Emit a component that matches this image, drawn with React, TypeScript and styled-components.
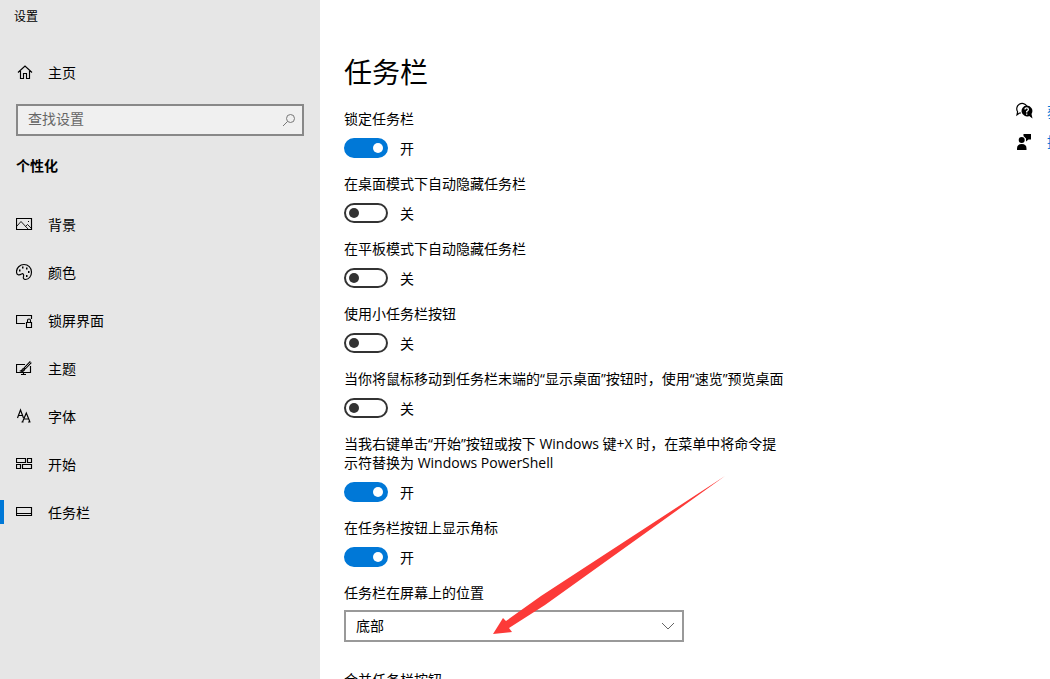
import React, { useId, useState } from 'react';
import styled, { createGlobalStyle, css } from 'styled-components';

const GlobalStyle = createGlobalStyle`
  *, *::before, *::after { box-sizing: border-box; }
  body {
    margin: 0;
    background: #fff;
    color: #000;
    font: 14px/19px 'Open Sans', 'Noto Sans CJK SC', sans-serif;
  }
  button, input, select { font: inherit; color: inherit; }
`;

const Window = styled.div`
  display: flex;
  height: 100vh;
  overflow: hidden;
`;

const Sidebar = styled.aside`
  flex: 0 0 320px;
  background: #e6e6e6;
`;

const WindowTitle = styled.div`
  padding: 9px 14px 7px;
  font-size: 12px;
  line-height: 16px;
`;

const NavLink = styled.a<{ $active?: boolean }>`
  display: flex;
  align-items: center;
  gap: 12px;
  height: 48px;
  padding-left: 12px;
  border-left: 4px solid transparent;
  color: #000;
  text-decoration: none;
  ${({ $active }) =>
    $active &&
    css`
      border-image: linear-gradient(transparent 12px, #0078d7 12px, #0078d7 36px, transparent 36px) 0 0 0 4;
    `}
`;

const HomeArea = styled.div`
  padding-top: 16px;
`;

const NavIcon = styled.svg`
  flex: none;
  width: 20px;
  height: 20px;
  fill: none;
  stroke: #000;
  stroke-width: 1.15;
`;

const SearchBox = styled.label`
  display: flex;
  align-items: center;
  height: 32px;
  margin: 8px 16px 0;
  padding: 0 6px 0 10px;
  border: 2px solid #888;
  background: #f0f0f0;
`;

const SearchInput = styled.input`
  flex: 1;
  min-width: 0;
  padding: 0 0 3px;
  border: 0;
  outline: 0;
  background: transparent;
  &::placeholder { color: #666; opacity: 1; }
`;

const SearchIcon = styled.svg`
  width: 14px;
  height: 14px;
  fill: none;
  stroke: #777;
`;

const GroupTitle = styled.h2`
  margin: 20px 16px 24px;
  font-size: 14px;
  line-height: 20px;
  font-weight: 700;
`;

const Main = styled.main`
  display: flex;
  flex: 1;
  min-width: 0;
  padding-left: 24px;
`;

const Settings = styled.section`
  flex: 1;
  min-width: 0;
`;

const PageTitle = styled.h1`
  margin: 52px 0 17px;
  font-size: 28px;
  line-height: 40px;
  font-weight: 400;
`;

const Setting = styled.div`
  display: flex;
  flex-direction: column;
  align-items: flex-start;
  gap: 10px;
  max-width: 445px;
  margin-bottom: 16px;
`;

const SelectSetting = styled(Setting)`
  gap: 8px;
  margin-bottom: 28px;
`;

const ToggleRow = styled.div`
  display: flex;
  align-items: center;
  gap: 12px;
  height: 20px;
`;

const Switch = styled.input`
  appearance: none;
  display: flex;
  align-items: center;
  width: 44px;
  height: 20px;
  margin: 0;
  padding: 0 3px;
  border: 2px solid #333;
  border-radius: 10px;
  &::before {
    content: '';
    width: 10px;
    height: 10px;
    border-radius: 50%;
    background: #333;
  }
  &:checked {
    justify-content: flex-end;
    border-color: #0078d7;
    background: #0078d7;
  }
  &:checked::before { background: #fff; }
`;

const SelectFrame = styled.div`
  display: grid;
  align-items: center;
  width: 340px;
  max-width: 100%;
  height: 32px;
  & > * { grid-area: 1 / 1; }
`;

const Select = styled.select`
  appearance: none;
  width: 100%;
  height: 32px;
  padding: 0 32px 2px 10px;
  border: 2px solid #999;
  border-radius: 0;
  background: #fff;
`;

const Chevron = styled.svg`
  justify-self: end;
  width: 14px;
  height: 8px;
  margin-right: 9px;
  fill: none;
  stroke: #666;
  pointer-events: none;
`;

const Related = styled.aside`
  display: flex;
  flex-direction: column;
  flex: 0 0 34px;
  gap: 10px;
  padding-top: 101px;
  overflow: hidden;
`;

const HelpLink = styled.a`
  display: flex;
  align-items: center;
  gap: 14px;
  height: 20px;
  color: #0078d7;
  text-decoration: none;
  white-space: nowrap;
`;

const HelpIcon = styled.svg`
  flex: none;
  width: 17px;
  height: 18px;
`;

const Arrow = styled.svg`
  position: absolute;
  left: 493px;
  top: 476px;
  width: 232px;
  height: 159px;
  fill: #fc3a38;
  pointer-events: none;
`;

const icons = {
  home: <path d="M2 9.500 9 3l7 6.500M4.500 8v7.500h3v-5h3v5h3V8" />,
  picture: (
    <>
      <path d="M.5 3.500h15v11H.5z" />
      <path d="M1 11l4-4.500 7.500 8M9.500 11.500l2-2 4 4" strokeWidth=".9" />
      <path d="M12 6.500h1" />
    </>
  ),
  palette: (
    <>
      <path d="M8 1.500a7.500 7.500 0 0 1 7.500 7.500c0 4-2.500 7.500-6 7.500-2 0-2.500-1.500-2-3 .5-2-.5-3.500-2-2.500-2.500 1.500-4.800 1-5-2C.3 5 4 1.500 8 1.500z" />
      <path d="M3 7.500h1.500M6 4.500h1.500M10 5.500h1.500M12 9h1.500M10 13h1.500" strokeWidth="1.800" />
    </>
  ),
  lock: (
    <>
      <path d="M9 12.500H.5v-8h15V8" />
      <path d="M10.500 11.500h5v5h-5zM11.500 11.500V9.500a1.500 1.500 0 0 1 3 0v2" />
    </>
  ),
  theme: (
    <>
      <path d="M9 5.500H.5v8h14V7M7.500 13.500v2M5 15.500h5" />
      <path d="M14.800 3 8.500 9.700" strokeWidth="2.600" />
      <path d="M14.500 3.300 9 9.200" stroke="#e6e6e6" strokeWidth=".8" />
      <path d="M8.500 9.700c-1.500-.5-2.500.5-2.500 1.500l-1.500.8c2 .8 4.500.2 4-2.300z" fill="#555" />
    </>
  ),
  font: (
    <>
      <path d="M1.500 11 4.500 3l3 8M2.500 8.500h4" />
      <path d="M6.500 15 10.300 6l3.700 9M7.500 12h5M5.500 15h2M12 15h2.500" />
    </>
  ),
  start: <path d="M.5 3.500h9v4h-9zM11.500 3.500h4v4h-4zM.5 9.500h4v4h-4zM6.500 9.500h9v4h-9z" />,
  taskbar: <path d="M.5 4.500h15v8H.5zM.5 10.500h15" />,
};

type IconName = keyof typeof icons;

const navItems: { icon: IconName; text: string; active?: boolean }[] = [
  { icon: 'picture', text: '背景' },
  { icon: 'palette', text: '颜色' },
  { icon: 'lock', text: '锁屏界面' },
  { icon: 'theme', text: '主题' },
  { icon: 'font', text: '字体' },
  { icon: 'start', text: '开始' },
  { icon: 'taskbar', text: '任务栏', active: true },
];

const toggles = [
  { text: '锁定任务栏', on: true },
  { text: '在桌面模式下自动隐藏任务栏', on: false },
  { text: '在平板模式下自动隐藏任务栏', on: false },
  { text: '使用小任务栏按钮', on: false },
  { text: '当你将鼠标移动到任务栏末端的“显示桌面”按钮时，使用“速览”预览桌面', on: false },
  { text: '当我右键单击“开始”按钮或按下 Windows 键+X 时，在菜单中将命令提示符替换为 Windows PowerShell', on: true },
  { text: '在任务栏按钮上显示角标', on: true },
];

function Icon({ name }: { name: IconName }) {
  return (
    <NavIcon viewBox="0 -1 20 20" aria-hidden="true">
      {icons[name]}
    </NavIcon>
  );
}

function ToggleSetting({ text, initial }: { text: string; initial: boolean }) {
  const id = useId();
  const [on, setOn] = useState(initial);
  return (
    <Setting>
      <label htmlFor={id}>{text}</label>
      <ToggleRow>
        <Switch id={id} type="checkbox" role="switch" checked={on} onChange={() => setOn(!on)} />
        <span>{on ? '开' : '关'}</span>
      </ToggleRow>
    </Setting>
  );
}

export default function App() {
  return (
    <>
      <GlobalStyle />
      <Window>
        <Sidebar>
          <WindowTitle>设置</WindowTitle>
          <HomeArea>
            <NavLink href="#home">
              <Icon name="home" />
              主页
            </NavLink>
          </HomeArea>
          <SearchBox>
            <SearchInput type="text" placeholder="查找设置" aria-label="查找设置" />
            <SearchIcon viewBox="0 0 14 14" aria-hidden="true">
              <circle cx="8.500" cy="5.500" r="4" />
              <path d="M5.500 8.500 1 13" />
            </SearchIcon>
          </SearchBox>
          <GroupTitle>个性化</GroupTitle>
          <nav>
            {navItems.map((item) => (
              <NavLink key={item.icon} href={`#${item.icon}`} $active={item.active}>
                <Icon name={item.icon} />
                {item.text}
              </NavLink>
            ))}
          </nav>
        </Sidebar>
        <Main>
          <Settings>
            <PageTitle>任务栏</PageTitle>
            {toggles.map((t) => (
              <ToggleSetting key={t.text} text={t.text} initial={t.on} />
            ))}
            <SelectSetting>
              <label htmlFor="position">任务栏在屏幕上的位置</label>
              <SelectFrame>
                <Select id="position" defaultValue="底部">
                  <option>底部</option>
                </Select>
                <Chevron viewBox="0 0 14 8" aria-hidden="true">
                  <path d="M1 1l6 6 6-6" />
                </Chevron>
              </SelectFrame>
            </SelectSetting>
            <Setting>
              <span>合并任务栏按钮</span>
            </Setting>
          </Settings>
          <Related>
            <HelpLink href="#help">
              <HelpIcon viewBox="0 0 17 18" aria-hidden="true">
                <path d="M5 11 3.500 11l-2.500 1.800.6-3A4.900 4.900 0 1 1 10.800 4" fill="none" stroke="#000" strokeWidth="1.200" />
                <path d="M10.700 3.600a5.400 5.400 0 1 0 2.500 10.300l3.300 2.600-1-4.600A5.400 5.400 0 0 0 10.700 3.600z" />
                <path d="M9 7.500q0-1.700 1.700-1.700T12.400 7.500q0 1-1.700 2v1M10.700 11.500v1.200" fill="none" stroke="#fff" strokeWidth="1.300" />
              </HelpIcon>
              获取帮助
            </HelpLink>
            <HelpLink href="#feedback">
              <HelpIcon viewBox="0 0 17 18" aria-hidden="true">
                <circle cx="5.700" cy="8" r="3" />
                <path d="M1 18v-1.500q0-4.500 4.800-4.500t4.700 4.500V18zM7.500 2h7.500v5.500h-2.500l-2.500 2V6.500L7.500 4z" />
              </HelpIcon>
              提供反馈
            </HelpLink>
          </Related>
        </Main>
      </Window>
      <Arrow viewBox="0 0 232 159" aria-hidden="true">
        <path d="M232 0 52 129 16 152l3 4-19 2L10 142l3 3L48 120z" />
      </Arrow>
    </>
  );
}
